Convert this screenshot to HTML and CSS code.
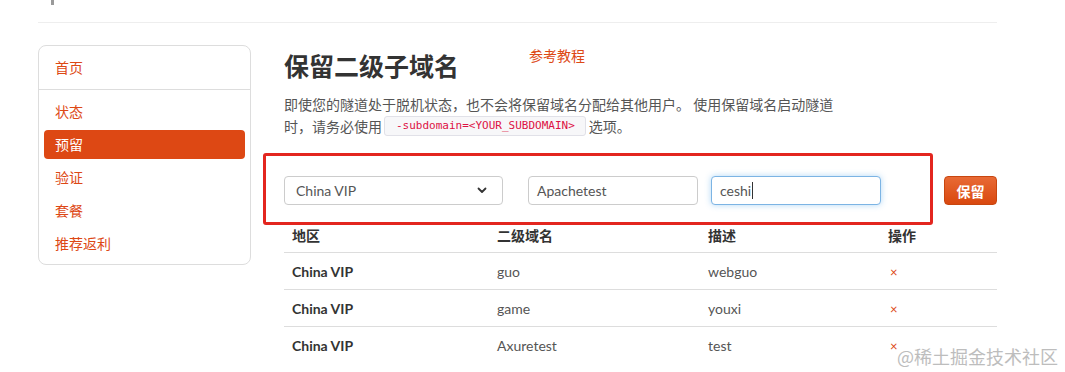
FILE: index.html
```html
<!DOCTYPE html>
<html lang="zh-CN">
<head>
<meta charset="utf-8">
<title>保留二级子域名</title>
<link rel="stylesheet" href="styles.css">
</head>
<body>
<div class="page">
  <div class="topbar"><span class="mark"></span></div>
  <div class="main">
    <nav class="sidebar">
      <a class="nav-home" href="#">首页</a>
      <ul class="nav-list">
        <li><a href="#">状态</a></li>
        <li class="active"><a href="#">预留</a></li>
        <li><a href="#">验证</a></li>
        <li><a href="#">套餐</a></li>
        <li><a href="#">推荐返利</a></li>
      </ul>
    </nav>
    <section class="content">
      <div class="title-row">
        <h1>保留二级子域名</h1>
        <a class="tutorial" href="#">参考教程</a>
      </div>
      <p class="desc">即使您的隧道处于脱机状态，也不会将保留域名分配给其他用户。 使用保留域名启动隧道时，请务必使用<code>-subdomain=&lt;YOUR_SUBDOMAIN&gt;</code>选项。</p>
      <div class="form-row">
        <div class="field select">
          <span>China VIP</span>
          <svg class="chev" width="10" height="7" viewBox="0 0 10 7"><path d="M1.5 1.5 L5 5 L8.5 1.5" fill="none" stroke="#333" stroke-width="1.8" stroke-linecap="round" stroke-linejoin="round"/></svg>
        </div>
        <div class="field input">Apachetest</div>
        <div class="field input focus">ceshi<span class="caret"></span></div>
        <button class="btn">保留</button>
      </div>
      <div class="annotation"></div>
      <table class="list">
        <thead>
          <tr><th class="c1">地区</th><th class="c2">二级域名</th><th class="c3">描述</th><th class="c4">操作</th></tr>
        </thead>
        <tbody>
          <tr><td class="region">China VIP</td><td>guo</td><td>webguo</td><td><span class="del">×</span></td></tr>
          <tr><td class="region">China VIP</td><td>game</td><td>youxi</td><td><span class="del">×</span></td></tr>
          <tr><td class="region">China VIP</td><td>Axuretest</td><td>test</td><td><span class="del">×</span></td></tr>
        </tbody>
      </table>
    </section>
  </div>
</div>
<div class="watermark">@稀土掘金技术社区</div>
</body>
</html>
```
FILE: styles.css
```css
html, body {
  margin: 0;
  padding: 0;
  background: #fff;
}
body {
  font-family: "Lato", "Noto Sans CJK SC", sans-serif;
  font-size: 14px;
  color: #555;
  position: relative;
  min-height: 372px;
  overflow: hidden;
}
.page {
  width: 959px;
  margin-left: 38px;
}
.topbar {
  height: 23px;
  border-bottom: 1px solid #eeeeee;
  box-sizing: border-box;
  display: flex;
  align-items: flex-start;
}
.mark {
  display: block;
  width: 3px;
  height: 5px;
  background: #9a9a9a;
  margin-left: 13px;
}
.main {
  display: flex;
  gap: 33px;
  margin-top: 22px;
}
.sidebar {
  width: 213px;
  box-sizing: border-box;
  border: 1px solid #dddddd;
  border-radius: 8px;
  align-self: flex-start;
  display: flex;
  flex-direction: column;
}
.sidebar a {
  color: #dd4814;
  text-decoration: none;
  font-family: "Noto Sans CJK SC", sans-serif;
  font-size: 14px;
}
.nav-home {
  display: block;
  height: 43px;
  line-height: 43px;
  padding-left: 16px;
  border-bottom: 1px solid #dddddd;
}
.nav-list {
  list-style: none;
  margin: 0;
  padding: 7px 5px 6px;
  display: flex;
  flex-direction: column;
  gap: 4px;
}
.nav-list a {
  display: block;
  height: 29px;
  line-height: 29px;
  padding-left: 11px;
  border-radius: 4px;
}
.nav-list li.active a {
  background: #dd4814;
  color: #fff;
}
.content {
  flex: 1;
  position: relative;
}
.title-row {
  display: flex;
  align-items: flex-start;
}
h1 {
  margin: 4px 0 0;
  font-family: "Noto Sans CJK SC", sans-serif;
  font-size: 25px;
  line-height: 32px;
  font-weight: 700;
  color: #333;
}
.tutorial {
  margin-left: 70px;
  color: #dd4814;
  text-decoration: none;
  font-family: "Noto Sans CJK SC", sans-serif;
  font-size: 14px;
  line-height: 20px;
}
.desc {
  width: 556px;
  margin: 12px 0 0;
  font-family: "Noto Sans CJK SC", sans-serif;
  font-size: 14px;
  line-height: 22px;
  color: #555;
}
.desc code {
  display: inline-block;
  vertical-align: top;
  margin-top: 1px;
  height: 20px;
  line-height: 18px;
  box-sizing: border-box;
  font-family: "DejaVu Sans Mono", monospace;
  font-size: 11px;
  color: #dd1144;
  background: #f7f7f9;
  border: 1px solid #e1e1e8;
  border-radius: 3px;
  padding: 0 10px 0 11px;
  margin-left: 2px;
  margin-right: 3px;
}
.form-row {
  display: flex;
  align-items: center;
  margin-top: 39px;
  height: 29px;
}
.field {
  box-sizing: border-box;
  height: 29px;
  border: 1px solid #cccccc;
  border-radius: 4px;
  background: #fff;
  color: #555;
  font-size: 14px;
  display: flex;
  align-items: center;
  padding: 0 11px;
}
.select {
  width: 219px;
  justify-content: space-between;
  padding-right: 15px;
}
.input {
  width: 170px;
  padding-left: 8px;
}
.select + .input {
  margin-left: 25px;
}
.input + .input {
  margin-left: 13px;
}
.focus {
  border-color: #7cb4e4;
  box-shadow: 0 0 6px rgba(82, 168, 236, 0.45);
}
.caret {
  display: inline-block;
  width: 1px;
  height: 17px;
  background: #333;
  margin-left: 1px;
}
.btn {
  margin-left: 63px;
  width: 53px;
  height: 29px;
  box-sizing: border-box;
  border: 1px solid #c8460f;
  border-radius: 4px;
  background: linear-gradient(#e86a35, #d9480f);
  color: #fff;
  font-family: "Noto Sans CJK SC", sans-serif;
  font-size: 14px;
  font-weight: 700;
  padding: 0;
}
.annotation {
  position: absolute;
  left: -21px;
  top: 108px;
  width: 670px;
  height: 72px;
  box-sizing: border-box;
  border: 3px solid #e3261f;
  border-radius: 3px;
  pointer-events: none;
}
.list {
  width: 713px;
  margin-top: 13px;
  border-collapse: collapse;
  table-layout: fixed;
}
.list th {
  height: 34px;
  padding: 0 8px;
  text-align: left;
  font-family: "Noto Sans CJK SC", sans-serif;
  font-weight: 700;
  font-size: 14px;
  color: #333;
  vertical-align: middle;
}
.list th.c1 { width: 189px; }
.list th.c2 { width: 195px; }
.list th.c3 { width: 164px; }
.list td {
  height: 36px;
  padding: 0 8px;
  border-top: 1px solid #dddddd;
  font-size: 14px;
  color: #555;
  vertical-align: middle;
}
.list td.region {
  font-weight: 700;
  color: #333;
}
.del {
  color: #dd4814;
  font-size: 13px;
  margin-left: 2px;
}
.watermark {
  position: absolute;
  left: 897px;
  top: 343px;
  font-family: "Noto Sans CJK SC", sans-serif;
  font-size: 18px;
  color: #bdbdbd;
  white-space: nowrap;
}
```
